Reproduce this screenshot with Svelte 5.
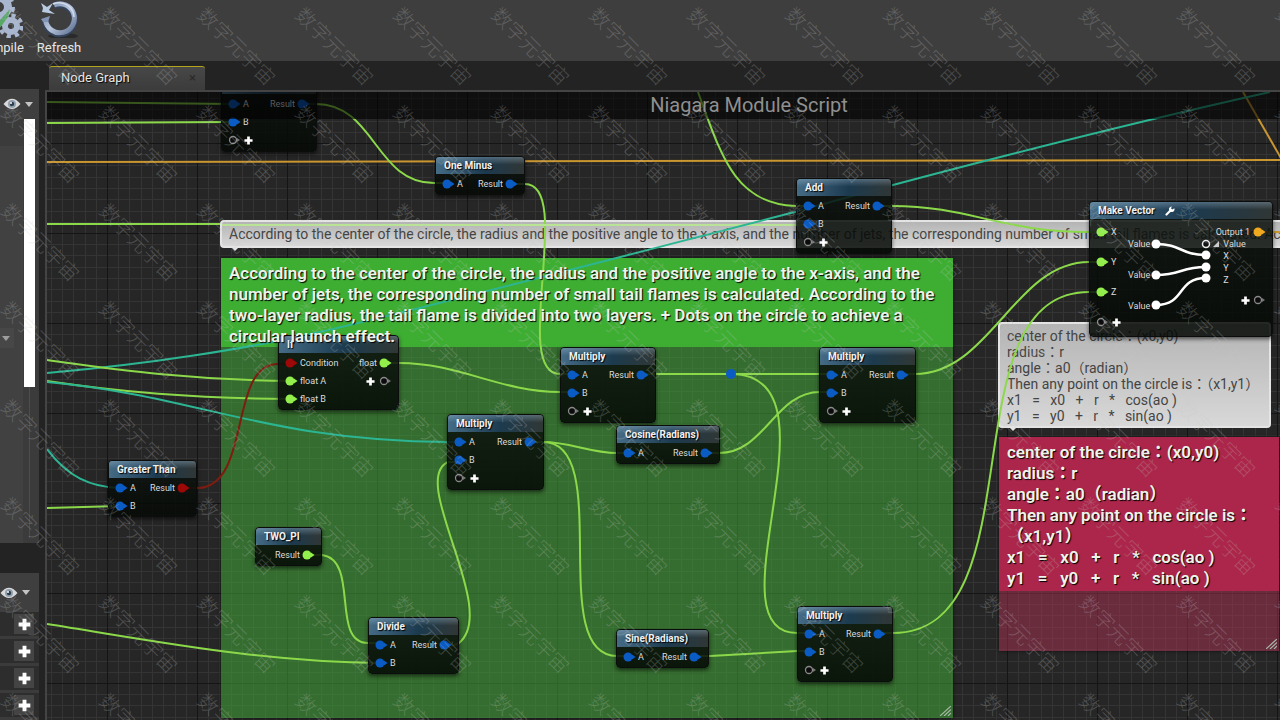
<script lang="ts">
  type Pin = { label: string; color?: string; add?: boolean };
  type GraphNode = {
    title: string;
    x: number;
    y: number;
    w: number;
    inputs: Pin[];
    outputs: Pin[];
  };

  const pan = { x: -47, y: -92 };

  const blue = "#0b5bc4";
  const lime = "#93f04c";
  const red = "#9d0808";

  const a: Pin = { label: "A", color: blue };
  const b: Pin = { label: "B", color: blue };
  const add: Pin = { label: "", add: true };
  const result: Pin = { label: "Result", color: blue };

  const nodes: GraphNode[] = [
    { title: "Multiply", x: 221, y: 76, w: 96, inputs: [a, b, add], outputs: [result] },
    { title: "One Minus", x: 435, y: 156, w: 90, inputs: [a], outputs: [result] },
    { title: "Add", x: 796, y: 178, w: 96, inputs: [a, b, add], outputs: [result] },
    {
      title: "If",
      x: 278,
      y: 335,
      w: 121,
      inputs: [
        { label: "Condition", color: red },
        { label: "float A", color: lime },
        { label: "float B", color: lime },
      ],
      outputs: [{ label: "float", color: lime }, add],
    },
    { title: "Multiply", x: 560, y: 347, w: 96, inputs: [a, b, add], outputs: [result] },
    { title: "Multiply", x: 819, y: 347, w: 97, inputs: [a, b, add], outputs: [result] },
    { title: "Multiply", x: 447, y: 414, w: 97, inputs: [a, b, add], outputs: [result] },
    { title: "Cosine(Radians)", x: 616, y: 425, w: 104, inputs: [a], outputs: [result] },
    {
      title: "Greater Than",
      x: 108,
      y: 460,
      w: 89,
      inputs: [a, b],
      outputs: [{ label: "Result", color: red }],
    },
    { title: "TWO_PI", x: 255, y: 527, w: 67, inputs: [], outputs: [{ label: "Result", color: lime }] },
    { title: "Divide", x: 368, y: 617, w: 91, inputs: [a, b], outputs: [result] },
    { title: "Sine(Radians)", x: 616, y: 629, w: 93, inputs: [a], outputs: [result] },
    { title: "Multiply", x: 797, y: 606, w: 96, inputs: [a, b, add], outputs: [result] },
  ];

  const wires = [
    { kind: "float", d: "M47 102L232 104" },
    { kind: "float", d: "M47 123L232 122" },
    { kind: "vec", d: "M47 162L1280 160" },
    { kind: "vec", d: "M1243 92L1282 160" },
    { kind: "vec", d: "M1260 232H1290" },
    { kind: "float", d: "M302 104H316C375 104 375 183 434 183H447" },
    { kind: "float", d: "M511 184H525C575 184 510 374 560 374H572" },
    { kind: "float", d: "M47 224H220" },
    { kind: "pale", d: "M222 225H808" },
    { kind: "float", d: "M698 92C722 158 735 203 795 206H808" },
    { kind: "float", d: "M877 206H892C970 206 1000 232 1089 232H1101" },
    { kind: "int", d: "M47 373C150 364 250 348 315 333C420 310 700 236 795 212C900 182 1100 130 1270 92" },
    { kind: "float", d: "M47 360C120 370 190 380 290 381" },
    { kind: "float", d: "M47 381C120 392 190 398 290 399" },
    { kind: "int", d: "M47 382C200 396 265 441 448 442H459" },
    { kind: "int", d: "M47 449C68 477 90 487 120 488" },
    { kind: "float", d: "M47 508L120 506" },
    { kind: "bool", d: "M184 488H198C252 486 228 364 278 364H290" },
    { kind: "float", d: "M385 363H399C460 363 500 392 560 392H572" },
    { kind: "float", d: "M642 374H831" },
    { kind: "float", d: "M731 374C848 374 706 633 797 633H809" },
    { kind: "float", d: "M530 442H543C570 442 590 453 617 453H629" },
    { kind: "float", d: "M543 442C615 442 545 656 617 656H629" },
    { kind: "float", d: "M706 453H719C765 453 775 392 820 392H831" },
    { kind: "float", d: "M901 374H915C990 374 1015 262 1089 262H1101" },
    { kind: "float", d: "M879 633H893C1040 633 945 292 1089 292H1101" },
    { kind: "float", d: "M446 645C452 645 455 646 459 643C500 610 408 480 448 462H459" },
    { kind: "float", d: "M308 555H322C360 560 330 643 368 643H380" },
    { kind: "float", d: "M47 624C150 640 260 662 380 663" },
    { kind: "float", d: "M696 656H710L797 651H809" },
  ];

  const minor = [11, 22, 34, 45, 56, 68, 79];

  const description =
    "According to the center of the circle, the radius and the positive angle to the x-axis, and the number of jets, the corresponding number of small tail flames is calculated. According to the two-layer radius, the tail flame is divided into two layers. + Dots on the circle to achieve a circular launch effect.";

  const formula = [
    "center of the circle：(x0,y0)",
    "radius：r",
    "angle：a0（radian）",
    "Then any point on the circle is：（x1,y1）",
    "x1   =   x0   +   r   *   cos(ao )",
    "y1   =   y0   +   r   *   sin(ao )",
  ];

  const stamp = "数字元宇宙";
  const stampStep = 98;
  const stamps = Array.from({ length: 14 * 8 }, (_, i) => ({
    x: 41 + (i % 14) * stampStep,
    y: 46 + Math.floor(i / 14) * stampStep,
  }));
</script>

{#snippet pinIcon(color: string | undefined)}
  <svg class="pin" width="14" height="10" viewBox="0 0 14 10">
    {#if color}
      <circle cx="5" cy="5" r="4.5" fill={color} />
      <path d="M9 2.5L12.5 5L9 7.5Z" fill={color} />
    {:else}
      <circle cx="5" cy="5" r="3.5" fill="#0b0b0b" stroke="#8a8a8a" stroke-width="1.3" />
      <path d="M9 3L12 5L9 7Z" fill="#777" />
    {/if}
  </svg>
{/snippet}

{#snippet plus(size: number)}
  <svg class="plus" width={size} height={size} viewBox="0 0 10 10">
    <path d="M3.5 .5H6.5V3.5H9.5V6.5H6.5V9.5H3.5V6.5H.5V3.5H3.5Z" fill="#fff" />
  </svg>
{/snippet}

{#snippet eye()}
  <svg width="18" height="12" viewBox="0 0 18 12">
    <path d="M.5 6Q9 -4.5 17.5 6Q9 16 .5 6Z" fill="#d9d9d9" />
    <circle cx="9" cy="6" r="4" fill="#8fa0b0" />
    <circle cx="9" cy="6" r="2.2" fill="#2f3c48" />
    <circle cx="8" cy="5" r="1" fill="#fff" />
  </svg>
{/snippet}

{#snippet caret()}
  <svg width="8" height="5" viewBox="0 0 8 5"><path d="M0 0H8L4 5Z" fill="#c4c4c4" /></svg>
{/snippet}

{#snippet grip()}
  <svg class="grip" width="11" height="10" viewBox="0 0 11 10">
    <path d="M0 10L11 0M4 10L11 3.5M8 10L11 7" stroke="#a8b8a8" stroke-width="1.2" />
  </svg>
{/snippet}

<div class="editor">
  <header class="toolbar">
    <button class="tool compile">
      <svg width="46" height="38" viewBox="0 0 46 38">
        <g fill="none" stroke="#a9b6cf">
          <circle cx="22" cy="7" r="9" stroke-width="8" />
          <circle cx="22" cy="7" r="14" stroke-width="4" stroke-dasharray="5 6" />
          <circle cx="34" cy="26" r="6" stroke-width="6" />
          <circle cx="34" cy="26" r="10.5" stroke-width="4" stroke-dasharray="4.2 4.05" />
        </g>
        <path d="M16 15L22 21L33 9L31 17L22 29Z" fill="#58a765" />
      </svg>
      <span>Compile</span>
    </button>
    <button class="tool">
      <svg width="40" height="38" viewBox="0 0 40 38">
        <defs>
          <linearGradient id="steel" x1="0" y1="0" x2="1" y2="1">
            <stop offset="0" stop-color="#6f83a3" />
            <stop offset=".5" stop-color="#b9c6dc" />
            <stop offset="1" stop-color="#5d6f8f" />
          </linearGradient>
        </defs>
        <ellipse cx="24" cy="36" rx="15" ry="3" fill="#222" opacity=".7" />
        <path d="M15 6A14.5 14.5 0 1 1 6.5 21" fill="none" stroke="#34435e" stroke-width="7" />
        <path d="M15 5A14.5 14.5 0 1 1 6.5 20" fill="none" stroke="url(#steel)" stroke-width="5" />
        <path d="M14 4A15 15 0 0 1 35 17" fill="none" stroke="#d3dcec" stroke-width="1.5" />
        <path d="M2 3L8 7L14 3L10 10L16 14L3 12L4 8Z" fill="#b9cbe0" />
        <path d="M2 19L11 16L9 22L4 22Z" fill="#8395b4" />
      </svg>
      <span>Refresh</span>
    </button>
  </header>

  <div class="workspace">
    <aside>
      <section class="panel details">
        <div class="filter">
          <button class="view" aria-label="View options">{@render eye()}{@render caret()}</button>
        </div>
        <div class="scroller">
          <div class="content">
            <button class="drop" aria-label="Expand">{@render caret()}</button>
          </div>
          <div class="track"><div class="thumb"></div></div>
        </div>
      </section>
      <section class="panel parameters">
        <div class="filter low">
          <button class="view" aria-label="Parameter view">{@render eye()}{@render caret()}</button>
        </div>
        {#each [1, 2, 3, 4] as row}
          <div class="row">
            <button class="plus-btn" aria-label="Add parameter {row}">{@render plus(13)}</button>
          </div>
        {/each}
      </section>
    </aside>

    <main>
      <nav>
        <button class="tab"><span>Node Graph</span><span class="close">×</span></button>
      </nav>
      <div class="graph">
        <div class="world" style="transform: translate({pan.x}px, {pan.y}px)">
          <svg class="layer">
            <defs>
              <pattern id="grid" x="17" y="53" width="90" height="90" patternUnits="userSpaceOnUse">
                <rect width="90" height="90" fill="#262626" />
                {#each minor as m}
                  <path d="M{m}.5 0V90M0 {m}.5H90" stroke="#343434" />
                {/each}
                <path d="M.5 0V90M0 .5H90" stroke="#151515" />
              </pattern>
            </defs>
            <rect width="2400" height="1600" fill="url(#grid)" />
          </svg>

          <article class="comment circle">
            <div class="head"><h2>{description}</h2></div>
            {@render grip()}
          </article>
          <article class="comment formula">
            <div class="head"><h2>{formula.join("\n")}</h2></div>
            {@render grip()}
          </article>
          <p class="bubble wide">{description}</p>
          <p class="bubble">{formula.join("\n")}</p>

          <svg class="layer">
            {#each wires as wire}
              <path class="wire {wire.kind}" d={wire.d} />
            {/each}
            <circle cx="731" cy="374" r="5" fill={blue} />
          </svg>

          {#each nodes as node}
            <div class="node" style="left: {node.x}px; top: {node.y}px; width: {node.w}px">
              <h3>{node.title}</h3>
              <div class="pins">
                <ul>
                  {#each node.inputs as pin}
                    <li class:add={pin.add}>
                      {@render pinIcon(pin.color)}
                      {#if pin.add}{@render plus(9)}{:else}<span>{pin.label}</span>{/if}
                    </li>
                  {/each}
                </ul>
                <ul class="out">
                  {#each node.outputs as pin}
                    <li>
                      {#if pin.add}{@render plus(9)}{:else}<span>{pin.label}</span>{/if}
                      {@render pinIcon(pin.color)}
                    </li>
                  {/each}
                </ul>
              </div>
            </div>
          {/each}

          <div class="node vector">
            <h3>
              Make Vector
              <svg width="10" height="10" viewBox="0 0 10 10">
                <path d="M1.5 8.5L6 4" stroke="#fff" stroke-width="2.2" stroke-linecap="round" />
                <path d="M9.3 2.2A2.8 2.8 0 1 1 6.8 .5L6 2.6L7.5 3.6Z" fill="#fff" />
              </svg>
            </h3>
            <div class="pins">
              <ul class="axes">
                {#each ["X", "Y", "Z"] as axis}
                  <li>{@render pinIcon(lime)}<span>{axis}</span></li>
                {/each}
                <li class="add">{@render pinIcon(undefined)}{@render plus(9)}</li>
              </ul>
              <ul class="values">
                <li>Value</li>
                <li>Value</li>
                <li>Value</li>
              </ul>
              <svg width="63" height="115" viewBox="0 0 63 115">
                <g fill="none" stroke="#fff" stroke-width="2.5">
                  <path d="M6 25C32 25 30 36 56 36" />
                  <path d="M6 56C32 56 30 48 56 48" />
                  <path d="M6 86C36 86 26 59 56 59" />
                </g>
                <g fill="#fff">
                  <circle cx="6" cy="25" r="4.5" />
                  <circle cx="6" cy="56" r="4.5" />
                  <circle cx="6" cy="86" r="4.5" />
                  <circle cx="56" cy="36" r="4.5" />
                  <circle cx="56" cy="48" r="4.5" />
                  <circle cx="56" cy="59" r="4.5" />
                </g>
                <circle cx="56" cy="25" r="3.5" fill="#111" stroke="#eee" stroke-width="1.5" />
              </svg>
              <ul class="result">
                <li class="end"><span>Output 1</span>{@render pinIcon("#f0a91f")}</li>
                <li>
                  <svg width="6" height="6" viewBox="0 0 6 6"><path d="M6 0V6H0Z" fill="#ccc" /></svg>
                  <span>Value</span>
                </li>
                <li class="sub">X</li>
                <li class="sub">Y</li>
                <li class="sub">Z</li>
                <li class="end more">{@render plus(9)}{@render pinIcon(undefined)}</li>
              </ul>
            </div>
          </div>
        </div>
        <h1>Niagara Module Script</h1>
      </div>
    </main>
  </div>

  <svg class="stamps" aria-hidden="true">
    {#each stamps as s}
      <text transform="translate({s.x} {s.y}) rotate(45)" text-anchor="middle" dy="8">{stamp}</text>
    {/each}
  </svg>
</div>

<style>
  :global(body) {
    background: #232323;
    overflow: hidden;
  }

  .editor {
    position: relative;
    display: flex;
    flex-direction: column;
    height: 100vh;
    overflow: hidden;
    background: #232323;
    color: #e6e6e6;
    font-family: Roboto, "Noto Sans CJK JP", sans-serif;
    font-size: 13px;
  }

  h1,
  h2,
  h3,
  p,
  ul {
    margin: 0;
    padding: 0;
  }

  ul {
    list-style: none;
  }

  button {
    display: flex;
    align-items: center;
    border: 0;
    padding: 0;
    background: none;
    color: inherit;
    font: inherit;
  }

  svg {
    display: block;
    flex-shrink: 0;
  }

  .toolbar {
    display: flex;
    flex-shrink: 0;
    gap: 13px;
    height: 61px;
    background: #3e3e3e;
    text-shadow: 1px 1px 1px #000;
  }

  .tool {
    flex-direction: column;
    gap: 2px;
    height: 56px;
  }

  .compile {
    margin-left: -24px;
  }

  .workspace {
    display: flex;
    flex: 1;
    min-height: 0;
  }

  aside {
    display: flex;
    flex-direction: column;
    gap: 30px;
    width: 39px;
    margin-right: 6px;
    padding-top: 28px;
  }

  .panel {
    background: #3b3b3b;
  }

  .details {
    display: flex;
    flex: 1;
    flex-direction: column;
  }

  .filter {
    display: flex;
    height: 30px;
    padding-left: 3px;
    background: #3f3f3f;
  }

  .filter.low {
    height: 39px;
    padding-left: 0;
  }

  .view {
    gap: 4px;
  }

  .scroller {
    display: flex;
    flex: 1;
  }

  .content {
    width: 23px;
    margin-top: 27px;
    padding-top: 182px;
    background: #414141;
  }

  .drop {
    width: 14px;
    height: 20px;
    padding-left: 2px;
    background: #4a4a4a;
    opacity: 0.7;
  }

  .track {
    width: 11px;
    margin: 0 0 5px 1px;
    background: linear-gradient(90deg, transparent 5px, #4c4c4c 5px, #4c4c4c 6px, transparent 6px);
  }

  .thumb {
    height: 64%;
    background: #fff;
  }

  .row {
    display: flex;
    align-items: center;
    justify-content: flex-end;
    height: 27px;
    padding-right: 5px;
    box-sizing: border-box;
    border-bottom: 3px solid #3b3b3b;
    background: #2d2d2d;
  }

  .plus-btn {
    justify-content: center;
    width: 20px;
    height: 20px;
    background: #444;
  }

  main {
    display: flex;
    flex: 1;
    flex-direction: column;
    min-width: 0;
  }

  nav {
    padding: 5px 0 0 4px;
  }

  .tab {
    justify-content: space-between;
    width: 156px;
    height: 24px;
    padding: 0 9px 2px 12px;
    border-top: 1px solid #b3a41c;
    border-radius: 3px 3px 0 0;
    background: linear-gradient(#474747, #3c3c3c);
    text-shadow: 1px 1px 1px #000;
  }

  .close {
    color: #2a2a2a;
    text-shadow: none;
  }

  .graph {
    position: relative;
    flex: 1;
    overflow: hidden;
    border: solid #444;
    border-width: 2px 0 0 2px;
    background: #262626;
  }

  .world {
    position: absolute;
    inset: 0;
  }

  .layer {
    position: absolute;
    left: 0;
    top: 0;
    overflow: visible;
  }

  h1 {
    position: relative;
    height: 27px;
    padding-left: 171px;
    background: rgba(0, 0, 0, 0.6);
    color: #8f8f8f;
    font-size: 20px;
    font-weight: 400;
    line-height: 27px;
    text-align: center;
  }

  .wire {
    fill: none;
    stroke-width: 2;
  }

  .float {
    stroke: #8bd94a;
  }

  .pale {
    stroke: #b9e495;
  }

  .vec {
    stroke: #c9962f;
  }

  .int {
    stroke: #2cb592;
  }

  .bool {
    stroke: #7d1d10;
  }

  .comment {
    position: absolute;
    color: #eef4ea;
    box-shadow: 0 0 3px #111;
  }

  .comment h2 {
    position: relative;
    z-index: 1;
    padding: 5px 8px 0;
    font-size: 17px;
    font-weight: 600;
    line-height: 21px;
    text-shadow: 1px 1px 1px #000;
    white-space: pre-wrap;
  }

  .circle {
    left: 221px;
    top: 258px;
    width: 732px;
    height: 460px;
    background: rgba(66, 168, 55, 0.54);
  }

  .circle .head {
    background: #3eae33;
  }

  .formula {
    left: 999px;
    top: 437px;
    width: 280px;
    height: 214px;
    background: rgba(170, 50, 84, 0.5);
  }

  .formula .head {
    padding-bottom: 2px;
    background: #ab264a;
  }

  .grip {
    position: absolute;
    right: 2px;
    bottom: 2px;
  }

  .bubble {
    position: absolute;
    left: 998px;
    top: 322px;
    padding: 4px 10px 2px 7px;
    border: 2px solid #e4e4e4;
    border-radius: 4px;
    background: linear-gradient(#b4b4b4, #d8d8d8);
    color: #444;
    font-size: 14px;
    line-height: 16px;
    white-space: pre;
  }

  .bubble::after {
    content: "";
    position: absolute;
    left: 8px;
    top: 100%;
    border: 5px solid transparent;
    border-top-color: #e4e4e4;
  }

  .bubble.wide {
    left: 220px;
    top: 220px;
    padding-bottom: 4px;
  }

  .node {
    position: absolute;
    box-sizing: border-box;
    padding-bottom: 1px;
    border: 1px solid #0a0d0c;
    border-radius: 4px;
    background: linear-gradient(rgba(14, 20, 16, 0.86), rgba(4, 8, 4, 0.86));
    box-shadow: 0 2px 4px rgba(0, 0, 0, 0.6);
    color: #dcdcdc;
    font-size: 9px;
  }

  .node h3 {
    display: flex;
    align-items: center;
    gap: 10px;
    height: 17px;
    padding-left: 8px;
    border-radius: 3px 3px 0 0;
    background:
      linear-gradient(rgba(170, 200, 220, 0.35), transparent 45%),
      linear-gradient(90deg, rgba(72, 112, 140, 0.95), rgba(30, 62, 86, 0.9) 55%, rgba(52, 58, 58, 0.9));
    color: #f2f2f2;
    font-size: 10px;
    font-weight: 700;
    text-shadow: 1px 1px 1px #000;
    white-space: nowrap;
  }

  .pins {
    display: flex;
    justify-content: space-between;
    padding: 1px 5px 0 6px;
  }

  .pins li {
    display: flex;
    align-items: center;
    gap: 1px;
    height: 18px;
    white-space: nowrap;
  }

  .pins li.add {
    margin-bottom: 1px;
  }

  .add .plus {
    margin-left: 1px;
  }

  .out {
    margin-left: auto;
  }

  .out li {
    justify-content: flex-end;
    gap: 2px;
  }

  .out .plus {
    margin-right: 2px;
  }

  .vector {
    left: 1089px;
    top: 201px;
    width: 184px;
  }

  .vector .pins {
    justify-content: flex-start;
    padding-top: 0;
  }

  .vector .axes {
    display: grid;
    gap: 4px;
    width: 32px;
  }

  .vector .axes li {
    height: 26px;
    margin: 0;
  }

  .vector .values {
    display: grid;
    align-content: start;
    gap: 9px;
    padding-top: 14px;
  }

  .vector .values li {
    height: 22px;
  }

  .vector .result {
    flex: 1;
    padding-top: 7px;
  }

  .vector .result li {
    gap: 4px;
    height: 12px;
  }

  .vector .result .sub {
    padding-left: 10px;
  }

  .vector .result .end {
    justify-content: flex-end;
    gap: 3px;
  }

  .vector .result .more {
    margin-top: 8px;
  }

  .stamps {
    position: absolute;
    inset: 0;
    width: 100%;
    height: 100%;
    pointer-events: none;
  }

  .stamps text {
    fill: rgba(200, 200, 200, 0.25);
    font-family: "Noto Sans CJK SC", sans-serif;
    font-size: 20px;
    font-weight: 300;
  }
</style>
